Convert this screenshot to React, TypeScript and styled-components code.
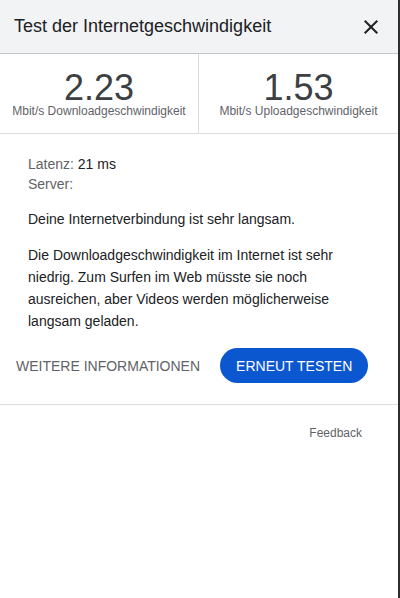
import React from 'react';
import styled, { createGlobalStyle } from 'styled-components';

const GlobalStyle = createGlobalStyle`
    html, body {
        margin: 0;
        padding: 0;
        background: #ffffff;
    }
    body {
        font-family: "Liberation Sans", Arial, sans-serif;
    }
`;

const Frame = styled.div`
    width: 400px;
    min-height: 598px;
    box-sizing: border-box;
    border-right: 2px solid #2e2e2e;
    background: #ffffff;
    display: flex;
    flex-direction: column;
`;

const Header = styled.div`
    height: 53px;
    display: flex;
    align-items: center;
    justify-content: space-between;
    padding: 0 15px 0 14px;
    background: #f1f3f4;
    border-bottom: 1px solid #c6c6c6;
`;

const Title = styled.div`
    font-size: 18px;
    color: #202124;
`;

const CloseButton = styled.button`
    width: 24px;
    height: 24px;
    padding: 0;
    border: none;
    background: none;
    display: flex;
    color: #202124;
    cursor: pointer;
`;

const Stats = styled.div`
    display: grid;
    grid-template-columns: 1fr 1fr;
    border-bottom: 1px solid #dadce0;
`;

const Stat = styled.div<{ divided?: boolean }>`
    display: flex;
    flex-direction: column;
    align-items: center;
    padding: 17px 0 16px;
    border-right: ${(props) => (props.divided ? '1px solid #dadce0' : 'none')};
`;

const Value = styled.div`
    font-size: 36px;
    line-height: 34px;
    color: #3c4043;
`;

const Unit = styled.div`
    font-size: 12px;
    line-height: 12px;
    color: #5f6368;
`;

const Body = styled.div`
    padding: 20px 28px 0;
`;

const Meta = styled.div`
    font-size: 14px;
    line-height: 20px;
    color: #5f6368;
`;

const MetaValue = styled.span`
    color: #202124;
`;

const Text = styled.p`
    margin: 14px 0 0;
    font-size: 14px;
    line-height: 22px;
    color: #202124;
`;

const Actions = styled.div`
    display: flex;
    align-items: center;
    gap: 20px;
    padding: 0 0 0 16px;
    margin: 16px 0 21px;
`;

const TextButton = styled.button`
    padding: 0;
    border: none;
    background: none;
    font-family: inherit;
    font-size: 14px;
    color: #5f6368;
    text-transform: uppercase;
    cursor: pointer;
`;

const PrimaryButton = styled.button`
    height: 35px;
    padding: 0 16px;
    border: none;
    border-radius: 18px;
    background: #0b57d0;
    font-family: inherit;
    font-size: 14px;
    color: #ffffff;
    text-transform: uppercase;
    cursor: pointer;
`;

const Footer = styled.div`
    border-top: 1px solid #dadce0;
    display: flex;
    justify-content: flex-end;
    padding: 20px 36px 0 0;
`;

const FeedbackLink = styled.a`
    font-size: 12px;
    line-height: 16px;
    color: #5f6368;
    text-decoration: none;
`;

const App: React.FC = () => {
    return (
        <>
            <GlobalStyle />
            <Frame>
                <Header>
                    <Title>Test der Internetgeschwindigkeit</Title>
                    <CloseButton aria-label="Schließen">
                        <svg width="24" height="24" viewBox="0 0 24 24">
                            <path
                                fill="currentColor"
                                d="M19 6.41 17.59 5 12 10.59 6.41 5 5 6.41 10.59 12 5 17.59 6.41 19 12 13.41 17.59 19 19 17.59 13.41 12z"
                            />
                        </svg>
                    </CloseButton>
                </Header>
                <Stats>
                    <Stat divided>
                        <Value>2.23</Value>
                        <Unit>Mbit/s Downloadgeschwindigkeit</Unit>
                    </Stat>
                    <Stat>
                        <Value>1.53</Value>
                        <Unit>Mbit/s Uploadgeschwindigkeit</Unit>
                    </Stat>
                </Stats>
                <Body>
                    <Meta>
                        Latenz: <MetaValue>21 ms</MetaValue>
                    </Meta>
                    <Meta>Server:</Meta>
                    <Text>Deine Internetverbindung ist sehr langsam.</Text>
                    <Text>
                        Die Downloadgeschwindigkeit im Internet ist sehr niedrig. Zum Surfen im Web müsste sie noch
                        ausreichen, aber Videos werden möglicherweise langsam geladen.
                    </Text>
                </Body>
                <Actions>
                    <TextButton>Weitere Informationen</TextButton>
                    <PrimaryButton>Erneut testen</PrimaryButton>
                </Actions>
                <Footer>
                    <FeedbackLink href="#feedback">Feedback</FeedbackLink>
                </Footer>
            </Frame>
        </>
    );
};

export default App;
